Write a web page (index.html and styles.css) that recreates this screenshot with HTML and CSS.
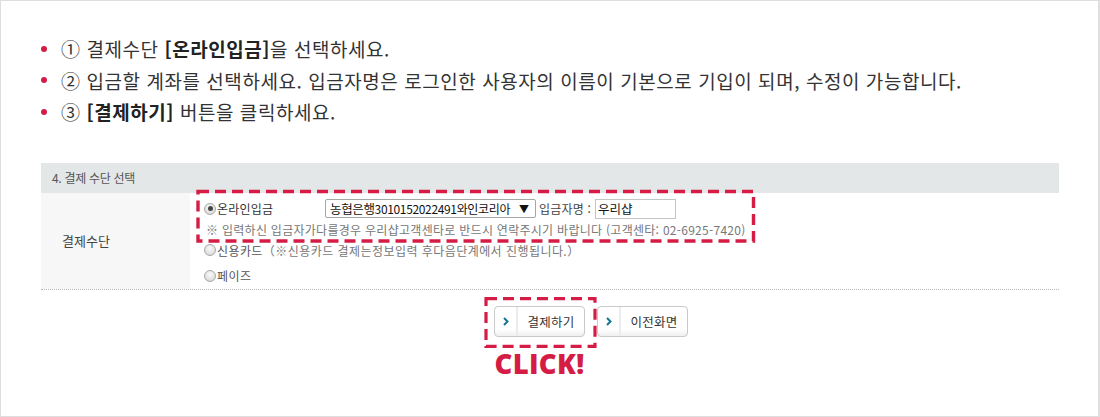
FILE: index.html
```html
<!DOCTYPE html>
<html lang="ko">
<head>
<meta charset="utf-8">
<title>결제수단 선택 안내</title>
<link rel="stylesheet" href="styles.css">
</head>
<body>
<div class="page">
  <ul class="steps">
    <li><span>① 결제수단 <b>[온라인입금]</b>을 선택하세요.</span></li>
    <li><span>② 입금할 계좌를 선택하세요. 입금자명은 로그인한 사용자의 이름이 기본으로 기입이 되며, 수정이 가능합니다.</span></li>
    <li><span>③ <b>[결제하기]</b> 버튼을 클릭하세요.</span></li>
  </ul>

  <section class="pay">
    <div class="pay-head">4. 결제 수단 선택</div>
    <div class="pay-row">
      <div class="pay-label">결제수단</div>
      <div class="pay-options">
        <div class="opt opt-bank">
          <span class="opt-name"><span class="radio checked"></span>온라인입금</span>
          <span class="select"><span class="select-text"><span class="bank">농협은행</span>3010152022491와인코리아</span><span class="arrow">▼</span></span>
          <span class="depositor-label">입금자명 :</span>
          <span class="input">우리샵</span>
        </div>
        <p class="note">※ 입력하신 입금자가다를경우 우리샵고객센타로 반드시 연락주시기 바랍니다 (고객센타: 02-6925-7420)</p>
        <div class="opt opt-card"><span class="radio"></span>신용카드<span class="card-note">（※신용카드 결제는정보입력 후다음단계에서 진행됩니다.）</span></div>
        <div class="opt opt-pay"><span class="radio"></span>페이즈</div>
      </div>
    </div>

    <div class="actions">
      <div class="action-main">
        <button class="btn" type="button"><span class="btn-ico"><svg width="6" height="9" viewBox="0 0 6 9"><path d="M1 1 L4.5 4.5 L1 8" fill="none" stroke="#137692" stroke-width="2"/></svg></span><span class="btn-label">결제하기</span></button>
        <div class="click">CLICK!</div>
      </div>
      <button class="btn" type="button"><span class="btn-ico"><svg width="6" height="9" viewBox="0 0 6 9"><path d="M1 1 L4.5 4.5 L1 8" fill="none" stroke="#137692" stroke-width="2"/></svg></span><span class="btn-label">이전화면</span></button>
    </div>
  </section>

  <svg class="marks" width="1100" height="417" viewBox="0 0 1100 417">
    <rect x="198" y="191.5" width="555.5" height="49.5" fill="none" stroke="#d41c45" stroke-width="3.4" stroke-dasharray="11 6"/>
    <rect x="486" y="298.7" width="109" height="47.6" fill="none" stroke="#d41c45" stroke-width="3.2" stroke-dasharray="11 6"/>
  </svg>
</div>
</body>
</html>
```

FILE: styles.css
```css
* { box-sizing: border-box; }

html, body {
  margin: 0;
  padding: 0;
  background: #fff;
}

.page {
  position: relative;
  width: 1100px;
  height: 417px;
  border: 1px solid #dedede;
  border-right-width: 2px;
  font-family: "Noto Sans CJK KR", "Noto Sans", sans-serif;
  color: #333;
  overflow: hidden;
}

/* steps list */
.steps {
  list-style: none;
  margin: 0;
  padding: 32px 0 0 40px;
}

.steps li {
  display: flex;
  align-items: center;
  height: 31.5px;
  font-size: 19px;
  letter-spacing: 0.55px;
  color: #333;
  white-space: nowrap;
}

.steps li::before {
  content: "";
  width: 6px;
  height: 6px;
  border-radius: 50%;
  background: #d41c45;
  margin-right: 14px;
  flex: none;
}

.steps b {
  font-weight: 700;
  color: #222;
}

/* payment table */
.pay {
  margin-top: 35px;
  padding: 0 39px 0 40px;
}

.pay-head {
  height: 30px;
  line-height: 30px;
  background: #e4e7e8;
  font-size: 12px;
  color: #555;
  padding-left: 11px;
  letter-spacing: -0.3px;
}

.pay-row {
  display: flex;
  border-bottom: 1px dotted #b8b8b8;
}

.pay-label {
  width: 149px;
  flex: none;
  background: #f7f7f7;
  display: flex;
  align-items: center;
  padding-left: 21px;
  font-size: 13px;
  color: #444;
}

.pay-options {
  flex: 1;
  padding: 6px 0 3px 14px;
  font-size: 12px;
  color: #333;
}

.opt {
  display: flex;
  align-items: center;
  height: 20px;
  white-space: nowrap;
  letter-spacing: 0;
}

.opt-name {
  display: flex;
  align-items: center;
  width: 121px;
  flex: none;
  letter-spacing: 0.2px;
}

.radio {
  width: 12px;
  height: 12px;
  border-radius: 50%;
  border: 1px solid #a9a9a9;
  background: radial-gradient(circle at 50% 35%, #fafafa 0, #e2e2e2 60%, #cfcfcf 100%);
  margin-right: 1px;
  flex: none;
  position: relative;
}

.radio.checked::after {
  content: "";
  position: absolute;
  left: 2.5px;
  top: 2.5px;
  width: 5px;
  height: 5px;
  border-radius: 50%;
  background: #444;
}

.select {
  display: flex;
  align-items: center;
  justify-content: space-between;
  width: 211px;
  height: 19px;
  border: 1px solid #a6a6a6;
  border-radius: 2px;
  padding: 0 6px 0 4px;
  color: #111;
  background: #fff;
  flex: none;
}

.select-text {
  letter-spacing: -0.35px;
}

.bank {
  font-size: 12.5px;
}

.arrow {
  font-size: 10px;
  color: #111;
}

.depositor-label {
  margin-left: 3px;
  color: #444;
  letter-spacing: 0.2px;
}

.input {
  width: 81px;
  height: 20px;
  margin-left: 4px;
  border: 1px solid #c4c4c4;
  padding: 0 2px;
  line-height: 18px;
  color: #111;
  font-size: 12.5px;
}

.note {
  margin: 0;
  height: 21px;
  line-height: 21px;
  padding-left: 2px;
  color: #777;
  letter-spacing: 0.28px;
  white-space: nowrap;
}

.opt-card {
  height: 21px;
  color: #555;
  letter-spacing: 0.4px;
}

.card-note {
  color: #777;
  letter-spacing: 0.45px;
}

.opt-pay {
  margin-top: 5px;
  height: 20px;
  color: #555;
  letter-spacing: 0.4px;
}

/* actions */
.actions {
  display: flex;
  align-items: flex-start;
  gap: 12px;
  margin: 16px 0 0 453px;
}

.action-main {
  display: flex;
  flex-direction: column;
  align-items: center;
  width: 91px;
}

.btn {
  display: flex;
  align-items: stretch;
  width: 91px;
  height: 31px;
  padding: 0;
  border: 1px solid #c9c9c9;
  border-radius: 4px;
  background: linear-gradient(#ffffff 0, #ffffff 75%, #f0f0f0 100%);
  box-shadow: inset 0 -2px 0 #f1f1f1;
  font-family: "Noto Sans CJK KR", "Noto Sans", sans-serif;
  color: #333;
  cursor: pointer;
}

.btn-ico {
  width: 23px;
  flex: none;
  display: flex;
  align-items: center;
  justify-content: center;
  border-right: 2px solid #ececec;
}

.btn-label {
  flex: 1;
  display: flex;
  align-items: center;
  justify-content: center;
  font-size: 12.5px;
  letter-spacing: 0.2px;
}

.click {
  margin-top: 12px;
  width: 113px;
  text-align: center;
  font-family: "Open Sans", "Noto Sans", sans-serif;
  font-weight: 800;
  font-size: 27.5px;
  line-height: 30px;
  color: #d41c45;
  letter-spacing: 0.3px;
}

/* annotation overlays */
.marks {
  position: absolute;
  left: -1px;
  top: -1px;
  pointer-events: none;
}
```
